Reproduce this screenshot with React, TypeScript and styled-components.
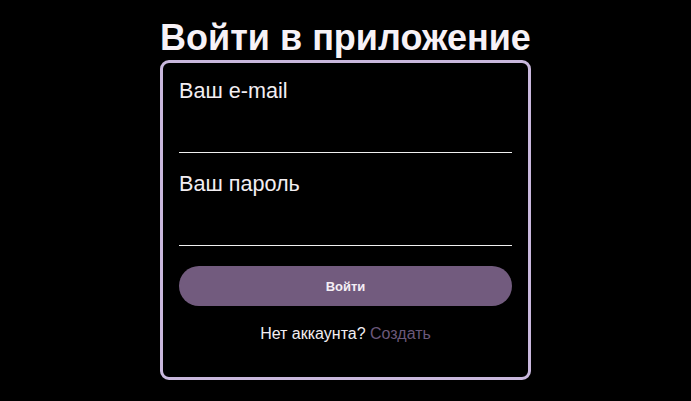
import React from 'react'
import styled, { createGlobalStyle } from 'styled-components'

const GlobalStyle = createGlobalStyle`
  html, body {
    margin: 0;
    padding: 0;
    background: #000;
    font-family: "Liberation Sans", Arial, sans-serif;
    color: #f4eff5;
  }
`

const Page = styled.main`
  display: flex;
  flex-direction: column;
  align-items: center;
  padding-top: 17px;
`

const Title = styled.h1`
  margin: 0 0 1px;
  font-size: 36px;
  font-weight: 700;
  color: #f7f2f7;
`

const Card = styled.form`
  box-sizing: border-box;
  width: 371px;
  height: 320px;
  border: 3px solid #c9b8dd;
  border-radius: 9px;
  padding: 16px 16px 0 16px;
  display: flex;
  flex-direction: column;
`

const Label = styled.label<{ $gap?: number }>`
  font-size: 21.6px;
  line-height: 24px;
  margin-top: ${p => p.$gap ?? 0}px;
  color: #f2eef2;
`

const Input = styled.input`
  box-sizing: border-box;
  height: 50px;
  border: none;
  border-bottom: 1px solid #f0f0f0;
  background: transparent;
  outline: none;
  color: #fff;
  font-size: 16px;
  font-family: inherit;
  padding: 0;
`

const Button = styled.button`
  margin-top: 20px;
  height: 40px;
  border: none;
  border-radius: 20px;
  background: #725b7e;
  color: #f4eff5;
  font-family: inherit;
  font-weight: 700;
  font-size: 13px;
  cursor: pointer;
`

const Footer = styled.p`
  margin: 19px 0 0;
  text-align: center;
  font-size: 16px;
  color: #f2eef2;
`

const CreateLink = styled.a`
  color: #6b587a;
  text-decoration: none;
`

const App = () => (
  <>
    <GlobalStyle />
    <Page>
      <Title>Войти в приложение</Title>
      <Card onSubmit={e => e.preventDefault()}>
        <Label htmlFor="email">Ваш e-mail</Label>
        <Input id="email" type="email" />
        <Label htmlFor="password" $gap={19}>Ваш пароль</Label>
        <Input id="password" type="password" />
        <Button type="submit">Войти</Button>
        <Footer>
          Нет аккаунта? <CreateLink href="#">Создать</CreateLink>
        </Footer>
      </Card>
    </Page>
  </>
)

export default App
